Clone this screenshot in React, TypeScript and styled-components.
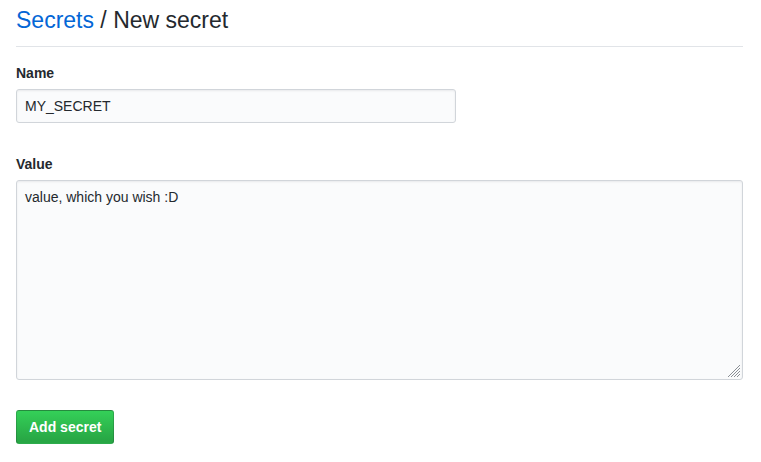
import styled, { createGlobalStyle } from 'styled-components';

const GlobalStyle = createGlobalStyle`
  * {
    box-sizing: border-box;
  }

  body {
    margin: 0;
    background: #ffffff;
    font-family: "Liberation Sans", Arial, sans-serif;
    font-size: 14px;
    color: #24292e;
  }
`;

const Page = styled.div`
  padding: 0 18px 0 16px;
`;

const Subhead = styled.div`
  padding: 2px 0 8px;
  border-bottom: 1px solid #e1e4e8;
  margin-bottom: 16px;
`;

const Heading = styled.h2`
  margin: 0;
  font-size: 23px;
  font-weight: 400;
  line-height: 36px;
  color: #24292e;
`;

const Crumb = styled.a`
  color: #0366d6;
  text-decoration: none;
`;

const Form = styled.form`
  display: flex;
  flex-direction: column;
  align-items: flex-start;
`;

const Group = styled.div<{ $gap: number }>`
  display: flex;
  flex-direction: column;
  align-self: stretch;
  margin-bottom: ${(p) => p.$gap}px;
`;

const Label = styled.label`
  font-size: 14px;
  font-weight: 700;
  line-height: 20px;
  margin-bottom: 6px;
`;

const fieldStyles = `
  font-family: "Liberation Sans", Arial, sans-serif;
  font-size: 14px;
  line-height: 20px;
  color: #24292e;
  padding: 6px 8px;
  background: #fafbfc;
  border: 1px solid #d1d5da;
  border-radius: 3px;
  box-shadow: inset 0 1px 2px rgba(27, 31, 35, 0.075);
  outline: none;
`;

const TextInput = styled.input`
  ${fieldStyles}
  width: 440px;
  height: 34px;
`;

const AreaWrap = styled.div`
  position: relative;
  display: flex;
`;

const TextArea = styled.textarea`
  ${fieldStyles}
  width: 100%;
  height: 200px;
  resize: none;
`;

const Grip = styled.svg`
  position: absolute;
  right: 2px;
  bottom: 2px;
  pointer-events: none;
`;

const SubmitButton = styled.button`
  font-family: "Liberation Sans", Arial, sans-serif;
  font-size: 14px;
  font-weight: 700;
  line-height: 20px;
  color: #ffffff;
  padding: 6px 12px;
  height: 34px;
  background: linear-gradient(-180deg, #34d058 0%, #28a745 90%);
  border: 1px solid rgba(27, 31, 35, 0.2);
  border-radius: 3px;
  cursor: pointer;
`;

const ResizeGrip = () => (
  <Grip width="14" height="14" viewBox="0 0 14 14" stroke="#8a8f95" strokeWidth="1">
    <line x1="13" y1="1" x2="1" y2="13" />
    <line x1="13" y1="4" x2="4" y2="13" />
    <line x1="13" y1="7" x2="7" y2="13" />
    <line x1="13" y1="10" x2="10" y2="13" />
  </Grip>
);

export default function App() {
  return (
    <>
      <GlobalStyle />
      <Page>
        <Subhead>
          <Heading>
            <Crumb href="#">Secrets</Crumb> / New secret
          </Heading>
        </Subhead>
        <Form onSubmit={(e) => e.preventDefault()}>
          <Group $gap={31}>
            <Label htmlFor="secret-name">Name</Label>
            <TextInput id="secret-name" defaultValue="MY_SECRET" />
          </Group>
          <Group $gap={30}>
            <Label htmlFor="secret-value">Value</Label>
            <AreaWrap>
              <TextArea id="secret-value" defaultValue="value, which you wish :D" />
              <ResizeGrip />
            </AreaWrap>
          </Group>
          <SubmitButton type="submit">Add secret</SubmitButton>
        </Form>
      </Page>
    </>
  );
}
